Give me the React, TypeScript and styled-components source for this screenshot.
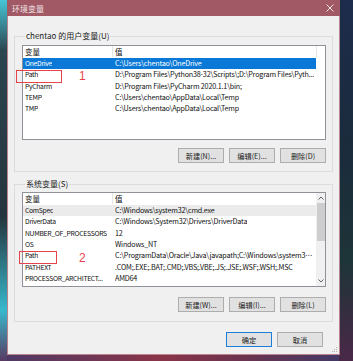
import React from 'react';
import styled, {createGlobalStyle} from 'styled-components';

interface IRow {
    name: string,
    value: string,
    state?: 'selected' | 'soft'
}

const userRows: IRow[] = [
    {name: 'OneDrive', value: 'C:\\Users\\chentao\\OneDrive', state: 'selected'},
    {name: 'Path', value: 'D:\\Program Files\\Python38-32\\Scripts\\;D:\\Program Files\\Pyth...'},
    {name: 'PyCharm', value: 'D:\\Program Files\\PyCharm 2020.1.1\\bin;'},
    {name: 'TEMP', value: 'C:\\Users\\chentao\\AppData\\Local\\Temp'},
    {name: 'TMP', value: 'C:\\Users\\chentao\\AppData\\Local\\Temp'},
]

const systemRows: IRow[] = [
    {name: 'ComSpec', value: 'C:\\Windows\\system32\\cmd.exe', state: 'soft'},
    {name: 'DriverData', value: 'C:\\Windows\\System32\\Drivers\\DriverData'},
    {name: 'NUMBER_OF_PROCESSORS', value: '12'},
    {name: 'OS', value: 'Windows_NT'},
    {name: 'Path', value: 'C:\\ProgramData\\Oracle\\Java\\javapath;C:\\Windows\\system32;...'},
    {name: 'PATHEXT', value: '.COM;.EXE;.BAT;.CMD;.VBS;.VBE;.JS;.JSE;.WSF;.WSH;.MSC'},
    {name: 'PROCESSOR_ARCHITECT...', value: 'AMD64'},
]

const GlobalStyle = createGlobalStyle`
  html, body {
    margin: 0;
    padding: 0;
  }
  body {
    width: 353px;
    height: 361px;
    overflow: hidden;
    font-family: "Noto Sans CJK SC", "Noto Sans", sans-serif;
    background: linear-gradient(180deg, #46c6d6 0%, #2c4550 14%, #24353d 60%, #38b8cc 86%, #583a62 100%) left top / 7px 100% no-repeat,
    linear-gradient(180deg, #1d2c4c 0%, #1a2b3c 40%, #1d3438 72%, #4a2848 100%) right top / 14px 100% no-repeat,
    linear-gradient(90deg, #4c3a66, #8a3448 45%, #6a3450 70%, #3c3a68) left bottom / 100% 8px no-repeat,
    #1d2c40;
  }
`

const Page = styled.div`
  padding-left: 7px;
`
const Window = styled.div`
  position: relative;
  width: 333px;
  height: 355px;
  box-sizing: border-box;
  background: #f0f0f0;
  border: 1px solid #b9848d;
  border-top: none;
  display: flex;
  flex-direction: column;
`
const TitleBar = styled.div`
  height: 16px;
  flex-shrink: 0;
  margin: 0 -1px;
  background: #a05965;
  display: flex;
  align-items: center;
  justify-content: space-between;
  padding: 0 6px 0 5px;
  color: #f2e4e6;
  font-size: 8px;
`
const Content = styled.div`
  padding: 15px 6px 0;
  display: flex;
  flex-direction: column;
`
const Group = styled.fieldset<{ $top: number, $bottom: number }>`
  margin: 0;
  padding: ${props => props.$top}px 6px ${props => props.$bottom}px 7px;
  border: 1px solid #dcdcdc;
  display: flex;
  flex-direction: column;
  & + & {
    margin-top: 7px;
  }
`
const Legend = styled.legend`
  padding: 0 1px;
  margin-left: 3px;
  font-size: 8px;
  line-height: 10px;
  color: #1a1a1a;
`
const TableBox = styled.div<{ $height: number }>`
  height: ${props => props.$height}px;
  flex-shrink: 0;
  box-sizing: border-box;
  border: 1px solid #8f9399;
  background: #fff;
  display: flex;
  overflow: hidden;
`
const List = styled.div`
  width: 293px;
  display: flex;
  flex-direction: column;
  overflow: hidden;
`
const Row = styled.div<{ $state?: 'selected' | 'soft' }>`
  height: 11.3px;
  flex-shrink: 0;
  display: grid;
  grid-template-columns: 90px 203px;
  align-items: center;
  font-size: 7.2px;
  letter-spacing: -0.2px;
  line-height: 11px;
  color: ${props => props.$state === 'selected' ? '#fff' : '#111'};
  background: ${props => props.$state === 'selected' ? '#0a78d6' : props.$state === 'soft' ? '#ebebeb' : 'transparent'};
`
const HeaderRow = styled(Row)`
  height: 11px;
  margin-bottom: 1px;
  font-size: 7.5px;
  letter-spacing: 0;
`
const Cell = styled.div<{ $divider?: boolean }>`
  padding: 0 0 0 2px;
  white-space: nowrap;
  overflow: hidden;
  border-right: ${props => props.$divider ? '1px solid #e5e5e5' : 'none'};
  height: 100%;
  display: flex;
  align-items: center;
  min-width: 0;
`
const NameCell = styled(Cell)`
  font-size: 6.8px;
  letter-spacing: -0.3px;
`
const CellText = styled.span`
  overflow: hidden;
  text-overflow: ellipsis;
  white-space: nowrap;
`
const SpareColumn = styled.div`
  flex: 1;
  display: flex;
  flex-direction: column;
`
const SpareHead = styled.div`
  height: 11px;
  border-left: 1px solid #e5e5e5;
`
const ScrollBar = styled.div`
  flex: 1;
  background: #f0f0f0;
  display: flex;
  flex-direction: column;
  align-items: center;
`
const ScrollArrow = styled.div`
  height: 10px;
  width: 100%;
  flex-shrink: 0;
  display: flex;
  align-items: center;
  justify-content: center;
`
const Thumb = styled.div`
  width: 8px;
  height: 38px;
  flex-shrink: 0;
  background: #cdcdcd;
`
const Track = styled.div`
  flex: 1;
`
const ButtonRow = styled.div<{ $top?: number }>`
  margin-top: ${props => props.$top ?? 8}px;
  display: flex;
  justify-content: flex-end;
  gap: 5px;
`
const Button = styled.button<{ $primary?: boolean }>`
  width: 46px;
  height: 15px;
  box-sizing: border-box;
  padding: 0;
  margin: 0;
  font-family: "Noto Sans CJK SC", "Noto Sans", sans-serif;
  font-size: 7.2px;
  color: #1a1a1a;
  background: #e1e1e1;
  border: ${props => props.$primary ? '1.5px solid #1a7fd8' : '1px solid #adadad'};
  display: flex;
  align-items: center;
  justify-content: center;
`
const DialogButtons = styled(ButtonRow)`
  padding-right: 10px;
`
const Mark = styled.div<{ $x: number, $y: number, $w: number, $h: number }>`
  position: absolute;
  left: ${props => props.$x}px;
  top: ${props => props.$y}px;
  width: ${props => props.$w}px;
  height: ${props => props.$h}px;
  border: 1px solid #e8424d;
  box-sizing: border-box;
`
const Num = styled.div<{ $x: number, $y: number }>`
  position: absolute;
  left: ${props => props.$x}px;
  top: ${props => props.$y}px;
  color: #e8424d;
  font-family: "Liberation Sans", sans-serif;
  font-size: 12px;
  line-height: 12px;
`
const Grip = styled.svg`
  position: absolute;
  right: 1px;
  bottom: 1px;
`

const Table = ({rows, height, scroll}: { rows: IRow[], height: number, scroll?: boolean }) => (
    <TableBox $height={height}>
        <List>
            <HeaderRow>
                <Cell $divider><CellText>变量</CellText></Cell>
                <Cell><CellText>值</CellText></Cell>
            </HeaderRow>
            {rows.map(row => (
                <Row key={row.name} $state={row.state}>
                    <NameCell><CellText>{row.name}</CellText></NameCell>
                    <Cell><CellText>{row.value}</CellText></Cell>
                </Row>
            ))}
        </List>
        {scroll ? (
            <ScrollBar>
                <ScrollArrow>
                    <svg width="6" height="4" viewBox="0 0 6 4"><path d="M0.5 3.5 L3 1 L5.5 3.5" fill="none" stroke="#606060" strokeWidth="1"/></svg>
                </ScrollArrow>
                <Thumb/>
                <Track/>
                <ScrollArrow>
                    <svg width="6" height="4" viewBox="0 0 6 4"><path d="M0.5 0.5 L3 3 L5.5 0.5" fill="none" stroke="#606060" strokeWidth="1"/></svg>
                </ScrollArrow>
            </ScrollBar>
        ) : (
            <SpareColumn>
                <SpareHead/>
            </SpareColumn>
        )}
    </TableBox>
)

const App = () => {
    return (
        <>
            <GlobalStyle/>
            <Page>
                <Window>
                    <TitleBar>
                        <span>环境变量</span>
                        <svg width="8" height="8" viewBox="0 0 8 8">
                            <path d="M0.5 0.5 L7.5 7.5 M7.5 0.5 L0.5 7.5" stroke="#f4e6e8" strokeWidth="1"/>
                        </svg>
                    </TitleBar>
                    <Content>
                        <Group $top={4} $bottom={8}>
                            <Legend>chentao 的用户变量(U)</Legend>
                            <Table rows={userRows} height={95}/>
                            <ButtonRow>
                                <Button>新建(N)...</Button>
                                <Button>编辑(E)...</Button>
                                <Button>删除(D)</Button>
                            </ButtonRow>
                        </Group>
                        <Group $top={3} $bottom={9}>
                            <Legend>系统变量(S)</Legend>
                            <Table rows={systemRows} height={95} scroll/>
                            <ButtonRow $top={10}>
                                <Button>新建(W)...</Button>
                                <Button>编辑(I)...</Button>
                                <Button>删除(L)</Button>
                            </ButtonRow>
                        </Group>
                        <DialogButtons $top={10}>
                            <Button $primary>确定</Button>
                            <Button>取消</Button>
                        </DialogButtons>
                    </Content>
                    <Mark $x={8} $y={70} $w={46} $h={13}/>
                    <Num $x={71} $y={70}>1</Num>
                    <Mark $x={11} $y={251} $w={38} $h={13}/>
                    <Num $x={71} $y={252}>2</Num>
                    <Grip width="6" height="6" viewBox="0 0 6 6">
                        <rect x="4" y="0" width="1" height="1" fill="#b0b0b0"/>
                        <rect x="2" y="2" width="1" height="1" fill="#b0b0b0"/>
                        <rect x="4" y="2" width="1" height="1" fill="#b0b0b0"/>
                        <rect x="0" y="4" width="1" height="1" fill="#b0b0b0"/>
                        <rect x="2" y="4" width="1" height="1" fill="#b0b0b0"/>
                        <rect x="4" y="4" width="1" height="1" fill="#b0b0b0"/>
                    </Grip>
                </Window>
            </Page>
        </>
    );
};

export default App;
